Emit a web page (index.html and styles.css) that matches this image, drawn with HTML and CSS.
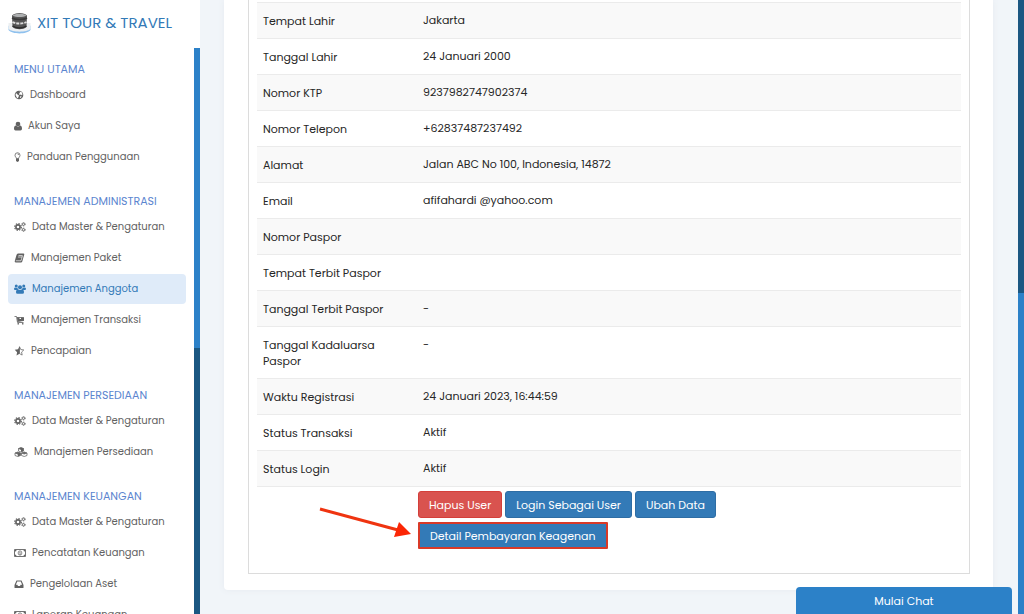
FILE: index.html
```html
<!DOCTYPE html>
<html lang="id">
<head>
<meta charset="utf-8">
<meta name="viewport" content="width=device-width, initial-scale=1">
<title>XIT Tour &amp; Travel</title>
<link rel="stylesheet" href="styles.css">
</head>
<body>
<svg class="symbols" aria-hidden="true">
  <symbol id="i-cogs" viewBox="0 0 24 20">
    <circle cx="8" cy="10" r="4.2" fill="none" stroke="currentColor" stroke-width="3.2"/>
    <circle cx="8" cy="10" r="6.8" fill="none" stroke="currentColor" stroke-width="2.2" stroke-dasharray="2.8 2.54"/>
    <g fill="none" stroke="currentColor"><circle cx="19" cy="4.5" r="2.3" stroke-width="1.8"/><circle cx="19" cy="4.5" r="3.7" stroke-width="1.4" stroke-dasharray="1.9 1.97"/><circle cx="19" cy="15.5" r="2.3" stroke-width="1.8"/><circle cx="19" cy="15.5" r="3.7" stroke-width="1.4" stroke-dasharray="1.9 1.97"/></g>
  </symbol>
  <symbol id="i-money" viewBox="0 0 24 20">
    <path fill="none" stroke="currentColor" stroke-width="1.8" d="M1 3h22v14H1z"/>
    <path fill="currentColor" d="M2 4h3a3 3 0 0 1-3 3zM22 4v3a3 3 0 0 1-3-3zM2 16v-3a3 3 0 0 1 3 3zM22 16h-3a3 3 0 0 1 3-3z"/>
    <ellipse cx="12" cy="10" rx="3.7" ry="4.4" fill="none" stroke="currentColor" stroke-width="1.4"/>
    <path fill="none" stroke="currentColor" stroke-width="1.2" d="M10.6 8.6l1.6-1v5M10.4 12.6h3.4"/>
  </symbol>
</svg>

<div class="layout">
  <aside class="sidebar">
    <a class="brand" href="#">
      <svg class="logo" viewBox="0 0 46 44" aria-hidden="true">
        <path fill="#8fc1ee" d="M1 27c4 6 38 6 44 0v9c-7 9-37 9-44 0z"/>
        <path fill="#eceff1" d="M1 22h44v12c-7 7-37 7-44 0z"/>
        <path fill="#555" d="M8 7c5-7 25-7 30 0l-1 23c-6 6-22 6-28 0z"/>
        <path fill="#aeb0b1" d="M9 7c6-5 22-5 28 0-7 4-21 4-28 0z"/>
        <path fill="none" stroke="#3a3a3a" stroke-width="3" d="M8 12c7 4 23 4 30 0"/>
        <path fill="none" stroke="#ddd" stroke-width="4" stroke-dasharray="6 2" d="M9 20c7 4 21 4 28 0"/>
        <path fill="none" stroke="#2e2e2e" stroke-width="3" d="M9 28c7 5 21 5 28 0"/>
      </svg>
      <span>XIT TOUR &amp; TRAVEL</span>
    </a>
    <div class="side-scroll">
      <nav class="menu">
        <section class="group">
          <h2 class="group-title">MENU UTAMA</h2>
          <a class="item" href="#"><svg class="icon w10" viewBox="0 0 18 20"><circle cx="9" cy="10" r="8.6" fill="currentColor"/><path fill="#fff" d="M10 3l4 1 2 4-1 3-2-2-3 1-1-3 2-1zM3 6l3 3 3 2-1 3-2 3-2-3-2-4zM11 13l3-1-1 3-2 1z"/></svg>Dashboard</a>
          <a class="item" href="#"><svg class="icon w8" viewBox="0 0 16 20"><circle cx="8" cy="6" r="4.7" fill="currentColor"/><path fill="currentColor" d="M4 9q4 4 8 0c3 0 4 3 4 6.500q0 3.500-3 3.500H3q-3 0-3-3.500C0 12 1 9 4 9z"/></svg>Akun Saya</a>
          <a class="item" href="#"><svg class="icon w7" viewBox="0 0 12 20"><path fill="none" stroke="currentColor" stroke-width="1.600" d="M4 13.500C4 11 1 9.500 1 6.500a5 5 0 0 1 10 0c0 3-3 4.500-3 7zM6 4q2.500 0 2.500 2"/><path fill="currentColor" d="M3 13h6v5l-3 2-3-2z"/></svg>Panduan Penggunaan</a>
        </section>
        <section class="group">
          <h2 class="group-title">MANAJEMEN ADMINISTRASI</h2>
          <a class="item" href="#"><svg class="icon w12"><use href="#i-cogs"/></svg>Data Master &amp; Pengaturan</a>
          <a class="item" href="#"><svg class="icon w11" viewBox="0 0 20 20"><path fill="currentColor" d="M7 1h11q2 0 1.500 2l-4 14q-.5 2-2.500 2H3q-3 0-2.500-3L4 4q.7-3 3-3z"/><path fill="none" stroke="#fff" stroke-width="1.300" d="M8 5h8M7 8h8M2.500 15.500H13l3-10"/></svg>Manajemen Paket</a>
          <a class="item active" href="#" aria-current="page"><svg class="icon w12" viewBox="0 0 24 20"><g fill="currentColor"><circle cx="4.500" cy="4" r="3"/><circle cx="19.500" cy="4" r="3"/><circle cx="12" cy="6.500" r="4"/><path d="M2 7q2.500 1.500 5 0 0 2 1 3.500-2 0-3 1.500H2q-2 0-2-2 0-3 2-3zM22 7q2 0 2 3 0 2-2 2h-3q-1-1.500-3-1.500 1-1.500 1-3.500 2.500 1.500 5 0zM8 10.500q4 3 8 0c3 0 4 3 4 6q0 3-3 3H7q-3 0-3-3c0-3 1-6 4-6z"/></g></svg>Manajemen Anggota</a>
          <a class="item" href="#"><svg class="icon w11" viewBox="0 0 20 20"><path fill="none" stroke="currentColor" stroke-width="1.600" d="M0 3h4l2 12h12M5 5h13v6L6 13"/><path fill="currentColor" d="M5 5h5v3h3V5h6v6.500L6 13z"/><circle cx="7.500" cy="17.500" r="1.700" fill="currentColor"/><circle cx="16.500" cy="17.500" r="1.700" fill="currentColor"/></svg>Manajemen Transaksi</a>
          <a class="item" href="#"><svg class="icon w11" viewBox="0 0 20 20"><path fill="none" stroke="currentColor" stroke-width="1.500" stroke-linejoin="round" d="M10 1.500l2.600 5.600 6 .8-4.400 4.200 1.100 6L10 15.200z"/><path fill="currentColor" d="M10 .5v15.200L4 19l1.200-6.600L.5 7.600l6.600-1z"/></svg>Pencapaian</a>
        </section>
        <section class="group">
          <h2 class="group-title">MANAJEMEN PERSEDIAAN</h2>
          <a class="item" href="#"><svg class="icon w12"><use href="#i-cogs"/></svg>Data Master &amp; Pengaturan</a>
          <a class="item" href="#"><svg class="icon w14" viewBox="0 0 26 20"><g fill="none" stroke="currentColor" stroke-width="1.500" stroke-linejoin="round"><path d="M13 1l5 2v5l-5 2-5-2V3zM8 3l5 2 5-2M6.500 10l5.500 2v5l-5.500 2L1 17v-5zM1 12l5.500 2 5.500-2M19.500 10l5.500 2v5l-5.500 2-5.500-2v-5zM14 12l5.500 2 5.500-2"/></g><path fill="currentColor" d="M8 3l5-2 5 2-5 2zM13 5l5-2v5l-5 2zM1 12l5.500-2 5.500 2-5.500 2zM6.500 14l5.500-2v5l-5.500 2zM14 12l5.500-2 5.500 2-5.500 2z"/></svg>Manajemen Persediaan</a>
        </section>
        <section class="group">
          <h2 class="group-title">MANAJEMEN KEUANGAN</h2>
          <a class="item" href="#"><svg class="icon w12"><use href="#i-cogs"/></svg>Data Master &amp; Pengaturan</a>
          <a class="item" href="#"><svg class="icon w12"><use href="#i-money"/></svg>Pencatatan Keuangan</a>
          <a class="item" href="#"><svg class="icon w10" viewBox="0 0 18 20"><path fill="currentColor" fill-rule="evenodd" d="M4 3h10l4 9v5q0 1-1 1H1q-1 0-1-1v-5zM5.500 5L2.700 11.500h3L7 14h4l1.300-2.500h3L12.500 5z"/></svg>Pengelolaan Aset</a>
          <a class="item" href="#"><svg class="icon w12"><use href="#i-money"/></svg>Laporan Keuangan</a>
        </section>
      </nav>
      <div class="track"><div class="thumb"></div></div>
    </div>
  </aside>

  <main class="main">
    <div class="card">
      <div class="panel">
        <table class="details">
          <tbody>
            <tr><th scope="row">Tempat Lahir</th><td>Jakarta</td></tr>
            <tr><th scope="row">Tanggal Lahir</th><td>24 Januari 2000</td></tr>
            <tr><th scope="row">Nomor KTP</th><td>9237982747902374</td></tr>
            <tr><th scope="row">Nomor Telepon</th><td>+62837487237492</td></tr>
            <tr><th scope="row">Alamat</th><td>Jalan ABC No 100, Indonesia, 14872</td></tr>
            <tr><th scope="row">Email</th><td>afifahardi @yahoo.com</td></tr>
            <tr><th scope="row">Nomor Paspor</th><td></td></tr>
            <tr><th scope="row">Tempat Terbit Paspor</th><td></td></tr>
            <tr><th scope="row">Tanggal Terbit Paspor</th><td>-</td></tr>
            <tr><th scope="row">Tanggal Kadaluarsa Paspor</th><td>-</td></tr>
            <tr><th scope="row">Waktu Registrasi</th><td>24 Januari 2023, 16:44:59</td></tr>
            <tr><th scope="row">Status Transaksi</th><td>Aktif</td></tr>
            <tr><th scope="row">Status Login</th><td>Aktif</td></tr>
          </tbody>
        </table>
        <div class="actions">
          <button class="btn danger" type="button">Hapus User</button>
          <button class="btn" type="button">Login Sebagai User</button>
          <button class="btn" type="button">Ubah Data</button>
          <button class="btn marked" type="button">Detail Pembayaran Keagenan</button>
          <svg class="arrow" viewBox="0 0 94 34" aria-hidden="true"><path d="M1 3l78 21" fill="none" stroke="#ef3410" stroke-width="3"/><path d="M80 16l12 12-17 3z" fill="#fb2605"/></svg>
        </div>
      </div>
    </div>
  </main>
  <div class="track page-track"><div class="thumb page-thumb"></div></div>
</div>
<button class="chat" type="button">Mulai Chat</button>
</body>
</html>
```

FILE: styles.css
```css
* { box-sizing: border-box; }

body {
  margin: 0;
  height: 100vh;
  overflow: hidden;
  background: #f1f5f9;
  color: #262626;
  font: 11px/16px Poppins, Inter, "Open Sans", sans-serif;
}

button { font: inherit; cursor: pointer; }

.symbols { position: absolute; width: 0; height: 0; }

.layout { display: flex; height: 100vh; }

.sidebar {
  display: flex;
  flex-direction: column;
  flex: 0 0 200px;
  background: #fff;
}

.brand {
  display: flex;
  align-items: center;
  gap: 6px;
  flex: 0 0 48px;
  padding: 0 8px 2px;
  color: #337ab7;
  font-size: 15px;
  text-decoration: none;
  white-space: nowrap;
}

.logo { width: 23px; height: 22px; }

.side-scroll { display: flex; flex: 1; min-height: 0; }

.menu { flex: 1; min-width: 0; padding: 10px 8px 0; overflow: hidden; }

.group { margin-bottom: 18px; }

.group-title {
  margin: 0;
  padding: 3px 6px;
  color: #5b85cf;
  font-size: 11px;
  font-weight: 400;
  line-height: 16px;
  white-space: nowrap;
}

.item {
  display: flex;
  align-items: center;
  gap: 6px;
  height: 30px;
  margin-bottom: 1px;
  padding: 0 6px;
  border-radius: 4px;
  color: #626262;
  font-size: 10px;
  text-decoration: none;
  white-space: nowrap;
}

.active { background: #dfebf9; color: #337ab7; }

.icon { flex: none; height: 10px; }
.w7 { width: 7px; }
.w8 { width: 8px; }
.w10 { width: 10px; }
.w11 { width: 11px; }
.w12 { width: 12px; }
.w14 { width: 14px; }

.track { flex: 0 0 6px; background: #1b5782; }
.thumb { height: 53%; background: #2c81c8; }

.page-track { display: flex; flex-direction: column; justify-content: flex-end; }
.page-thumb { height: 321px; }

.main { flex: 1; min-width: 0; padding: 0 25px 24px 24px; }

.card {
  height: 100%;
  padding: 0 23px 16px 24px;
  border-radius: 0 0 4px 4px;
  background: #fff;
  box-shadow: 0 0 6px #e6eaf0;
}

.panel {
  height: 100%;
  padding: 2px 8px 0;
  border: solid #dcdcdc;
  border-width: 0 1px 1px;
}

.details {
  width: 100%;
  border-collapse: separate;
  border-spacing: 0;
  border-bottom: 1px solid #ebebeb;
}

.details th,
.details td {
  padding: 9px 6px 10px;
  border-top: 1px solid #ebebeb;
  text-align: left;
  vertical-align: top;
}

.details th {
  width: 160px;
  padding: 10px 30px 9px 6px;
  font-weight: 400;
}

.details tr:nth-child(odd) { background: #f9f9f9; }

.actions {
  position: relative;
  display: flex;
  flex-wrap: wrap;
  gap: 4px 3px;
  max-width: 520px;
  padding: 4px 0 0 161px;
}

.btn {
  height: 27px;
  padding: 0 10px;
  border: 1px solid #2e6da4;
  border-radius: 3px;
  background: #337ab7;
  color: #fff;
  white-space: nowrap;
}

.danger { border-color: #d43f3a; background: #d9534f; }

.marked { border: 2px solid #d93a28; border-radius: 1px; }

.arrow { position: absolute; left: 62px; top: 19px; width: 94px; height: 34px; }

.chat {
  position: fixed;
  right: 12px;
  bottom: 0;
  width: 216px;
  height: 27px;
  padding: 0;
  border: 0;
  border-radius: 4px 4px 0 0;
  background: #2c81c8;
  color: #fff;
}
```
